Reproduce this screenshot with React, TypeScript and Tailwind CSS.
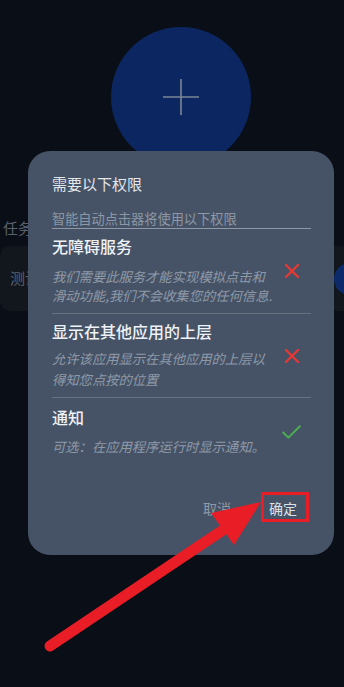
import { X, Check } from "lucide-react";

const font = { fontFamily: '"Noto Sans CJK SC", "Noto Sans", sans-serif' };

function Permission({
  title,
  lines,
  ok,
  gap,
  leading,
}: {
  title: string;
  lines: string[];
  ok?: boolean;
  gap: string;
  leading: string;
}) {
  return (
    <div className="flex items-center justify-between">
      <div>
        <div className="text-[16px] leading-[22px] font-medium text-[#eef1f5]">{title}</div>
        <div className={`${gap} text-[13.3px] ${leading} italic text-[#8e99a8]`}>
          {lines.map((l) => (
            <div key={l}>{l}</div>
          ))}
        </div>
      </div>
      <div className="mr-[7px] mt-[1px]">
        {ok ? (
          <Check size={25} strokeWidth={1.8} className="text-[#4caf50]" />
        ) : (
          <X size={24} strokeWidth={2.4} className="text-[#e53935]" />
        )}
      </div>
    </div>
  );
}

export default function App() {
  return (
    <div className="relative w-[344px] h-[687px] overflow-hidden bg-[#0a0e16]" style={font}>
      {/* background page */}
      <div className="flex flex-col">
        <div className="ml-[111px] mt-[27px] w-[140px] h-[140px] rounded-full bg-[#0b2660] flex items-center justify-center">
          <svg width="36" height="36" viewBox="0 0 36 36">
            <path d="M18 0V36M0 18H36" stroke="#7b8595" strokeWidth="1.6" />
          </svg>
        </div>
        <div className="mt-[50px] ml-[3px] text-[15px] leading-[22px] text-[#5a606b]">任务</div>
        <div className="mt-[7px] h-[65px] w-[360px] rounded-[10px] bg-[#12161d] flex items-center justify-between">
          <span className="ml-[10px] text-[15px] text-[#5b626d]">测试</span>
          <div className="w-[40px] h-[32px] rounded-full bg-[#0c2a6a] mr-[-14px]" />
        </div>
      </div>

      {/* dialog */}
      <div className="absolute left-[28px] top-[151px] w-[306px] h-[404px] rounded-[22px] bg-[#465366] pl-[24px] pr-[23px] flex flex-col">
        <div className="mt-[22px] text-[15px] leading-[22px] text-[#e3e6ea]">需要以下权限</div>
        <div className="mt-[15px] text-[13.2px] leading-[18px] text-[#8d97a5] border-b border-[#8d98a6]">
          智能自动点击器将使用以下权限
        </div>
        <div className="mt-[6px] pb-[8px] border-b border-[#66727f]">
          <Permission
            title="无障碍服务"
            lines={["我们需要此服务才能实现模拟点击和", "滑动功能,我们不会收集您的任何信息."]}
            gap="mt-[10px]"
            leading="leading-[19px]"
          />
        </div>
        <div className="mt-[6px] pb-[7px] border-b border-[#66727f]">
          <Permission
            title="显示在其他应用的上层"
            lines={["允许该应用显示在其他应用的上层以", "得知您点按的位置"]}
            gap="mt-[6px]"
            leading="leading-[21px]"
          />
        </div>
        <div className="mt-[8px]">
          <Permission title="通知" lines={["可选：在应用程序运行时显示通知。"]} ok gap="mt-[9px]" leading="leading-[20px]" />
        </div>
        <div className="mt-auto mb-[37px] flex justify-end items-center gap-[38px] pr-[14px] text-[14px] leading-[20px]">
          <span className="text-[#8e99a8]">取消</span>
          <span className="text-[#dde2e8]">确定</span>
        </div>
      </div>

      {/* annotation */}
      <div className="absolute left-[261px] top-[492px] w-[48px] h-[30px] border-[3px] border-[#e81d25]" />
      <svg className="absolute inset-0 pointer-events-none" width="344" height="687" viewBox="0 0 344 687">
        <line x1="50" y1="646" x2="226" y2="528" stroke="#e81d25" strokeWidth="11" strokeLinecap="round" />
        <polygon points="261,502 211,513 234,545" fill="#e81d25" />
      </svg>
    </div>
  );
}
